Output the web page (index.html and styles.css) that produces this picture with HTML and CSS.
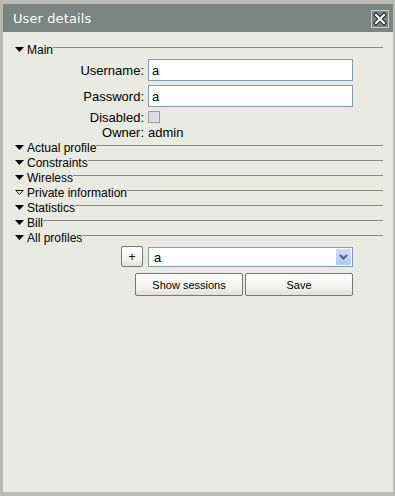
FILE: index.html
```html
<!DOCTYPE html>
<html lang="en">
<head>
    <meta charset="UTF-8">
    <title>User details</title>
    <link rel="stylesheet" href="styles.css">
</head>
<body>
    <div class="window">
        <div class="titlebar">
            <span class="title">User details</span>
            <button class="close" type="button" aria-label="Close">
                <svg width="14" height="14" viewBox="0 0 14 14">
                    <path d="M3 3 L11 11 M11 3 L3 11" stroke="#1e2426" stroke-width="4.2" stroke-linecap="square"/>
                    <path d="M3 3 L11 11 M11 3 L3 11" stroke="#fff" stroke-width="2.2" stroke-linecap="square"/>
                </svg>
            </button>
        </div>

        <div class="content">
            <div class="section">
                <div class="legend">
                    <svg class="arrow" width="9" height="5" viewBox="0 0 9 5"><path d="M0 0 H9 L4.5 5 Z" fill="#000"/></svg>
                    <span class="legend-text">Main</span><span class="rule"></span>
                </div>
                <div class="section-body">
                    <div class="field">
                        <label class="field-label" for="username">Username:</label>
                        <input class="text-input" type="text" id="username" value="a">
                    </div>
                    <div class="field">
                        <label class="field-label" for="password">Password:</label>
                        <input class="text-input" type="text" id="password" value="a">
                    </div>
                    <div class="field field-check">
                        <label class="field-label" for="disabled">Disabled:</label>
                        <input class="checkbox" type="checkbox" id="disabled">
                    </div>
                    <div class="field field-text">
                        <span class="field-label">Owner:</span>
                        <span class="field-value">admin</span>
                    </div>
                </div>
            </div>

            <div class="legend">
                <svg class="arrow" width="9" height="5" viewBox="0 0 9 5"><path d="M0 0 H9 L4.5 5 Z" fill="#000"/></svg>
                <span class="legend-text">Actual profile</span><span class="rule"></span>
            </div>
            <div class="legend">
                <svg class="arrow" width="9" height="5" viewBox="0 0 9 5"><path d="M0 0 H9 L4.5 5 Z" fill="#000"/></svg>
                <span class="legend-text">Constraints</span><span class="rule"></span>
            </div>
            <div class="legend">
                <svg class="arrow" width="9" height="5" viewBox="0 0 9 5"><path d="M0 0 H9 L4.5 5 Z" fill="#000"/></svg>
                <span class="legend-text">Wireless</span><span class="rule"></span>
            </div>
            <div class="legend">
                <svg class="arrow" width="9" height="5" viewBox="0 0 9 5"><path d="M0.8 0.5 H8.2 L4.5 4.4 Z" fill="none" stroke="#000" stroke-width="0.9"/></svg>
                <span class="legend-text">Private information</span><span class="rule"></span>
            </div>
            <div class="legend">
                <svg class="arrow" width="9" height="5" viewBox="0 0 9 5"><path d="M0 0 H9 L4.5 5 Z" fill="#000"/></svg>
                <span class="legend-text">Statistics</span><span class="rule"></span>
            </div>
            <div class="legend">
                <svg class="arrow" width="9" height="5" viewBox="0 0 9 5"><path d="M0 0 H9 L4.5 5 Z" fill="#000"/></svg>
                <span class="legend-text">Bill</span><span class="rule"></span>
            </div>

            <div class="section">
                <div class="legend">
                    <svg class="arrow" width="9" height="5" viewBox="0 0 9 5"><path d="M0 0 H9 L4.5 5 Z" fill="#000"/></svg>
                    <span class="legend-text">All profiles</span><span class="rule"></span>
                </div>
                <div class="profiles">
                    <button class="btn btn-add" type="button">+</button>
                    <div class="select">
                        <span class="select-text">a</span>
                        <span class="select-arrow">
                            <svg width="9" height="6" viewBox="0 0 9 6">
                                <path d="M1 1 L4.5 4.5 L8 1" fill="none" stroke="#4d6185" stroke-width="2"/>
                            </svg>
                        </span>
                    </div>
                </div>
                <div class="actions">
                    <button class="btn btn-wide" type="button">Show sessions</button>
                    <button class="btn btn-wide" type="button">Save</button>
                </div>
            </div>
        </div>
    </div>
</body>
</html>
```

FILE: styles.css
```css
html, body {
    margin: 0;
    padding: 0;
}
body {
    font-family: "Liberation Sans", Arial, sans-serif;
    background: #b8b9b1;
    color: #000;
}
.window {
    box-sizing: border-box;
    width: 395px;
    height: 496px;
    border-style: solid;
    border-color: #b9bab2;
    border-width: 4px 2px 4px 3px;
    background: #e9eae2;
    display: flex;
    flex-direction: column;
}
.titlebar {
    height: 28px;
    background: #7a8480;
    display: flex;
    align-items: center;
    justify-content: space-between;
    padding: 0 4px 0 10px;
}
.title {
    font-family: "DejaVu Sans", Verdana, sans-serif;
    font-size: 13px;
    color: #fff;
    letter-spacing: 0.1px;
}
.close {
    width: 18px;
    height: 18px;
    padding: 0;
    margin-top: 1px;
    border: 1px solid #c6cbc8;
    background: transparent;
    display: flex;
    align-items: center;
    justify-content: center;
}
.content {
    padding: 11px 10px 0 12px;
}
.legend {
    display: flex;
    height: 15px;
    line-height: 15px;
    font-size: 12px;
}
.arrow {
    flex: none;
    margin: 4px 3px 0 0;
}
.legend-text {
    white-space: nowrap;
}
.rule {
    flex: 1;
    height: 1px;
    margin-top: 4px;
    background: #898989;
}
.section-body {
    padding-top: 1px;
}
.field {
    display: flex;
    align-items: center;
    height: 22px;
    margin-bottom: 4px;
    font-size: 13px;
}
.field-label {
    width: 129px;
    margin-right: 4px;
    text-align: right;
}
.text-input {
    box-sizing: border-box;
    width: 205px;
    height: 22px;
    margin: 0;
    padding: 0 3px;
    border: 1px solid #7f9db9;
    background: #fff;
    font-family: "Liberation Sans", Arial, sans-serif;
    font-size: 13px;
    outline: none;
}
.field-check {
    height: 12px;
    margin-bottom: 2px;
}
.checkbox {
    appearance: none;
    box-sizing: border-box;
    width: 12px;
    height: 12px;
    margin: 0;
    border: 1px solid #9c9ca4;
    background: #dcdce2;
}
.field-text {
    height: 16px;
    margin-bottom: 0;
    line-height: 16px;
}
.profiles {
    display: flex;
    align-items: flex-start;
    padding: 0 0 0 106px;
}
.btn {
    box-sizing: border-box;
    margin: 0;
    padding: 0;
    border: 1px solid #777;
    border-radius: 2px;
    background: linear-gradient(#ffffff, #f4f3ee 60%, #e2e0d6);
    font-family: "Liberation Sans", Arial, sans-serif;
    font-size: 11px;
    color: #000;
}
.btn-add {
    width: 22px;
    height: 21px;
    margin-right: 5px;
    font-size: 12px;
}
.select {
    box-sizing: border-box;
    width: 205px;
    height: 20px;
    margin-top: 1px;
    border: 1px solid #7f9db9;
    background: #fff;
    display: flex;
    align-items: center;
    justify-content: space-between;
    padding: 0 1px 0 5px;
    font-size: 13px;
}
.select-arrow {
    width: 15px;
    height: 16px;
    border-radius: 1px;
    background: linear-gradient(#cedcfc, #b3c7f4);
    display: flex;
    align-items: center;
    justify-content: center;
}
.actions {
    display: flex;
    gap: 2px;
    padding: 6px 0 0 120px;
}
.btn-wide {
    width: 108px;
    height: 23px;
}
```
